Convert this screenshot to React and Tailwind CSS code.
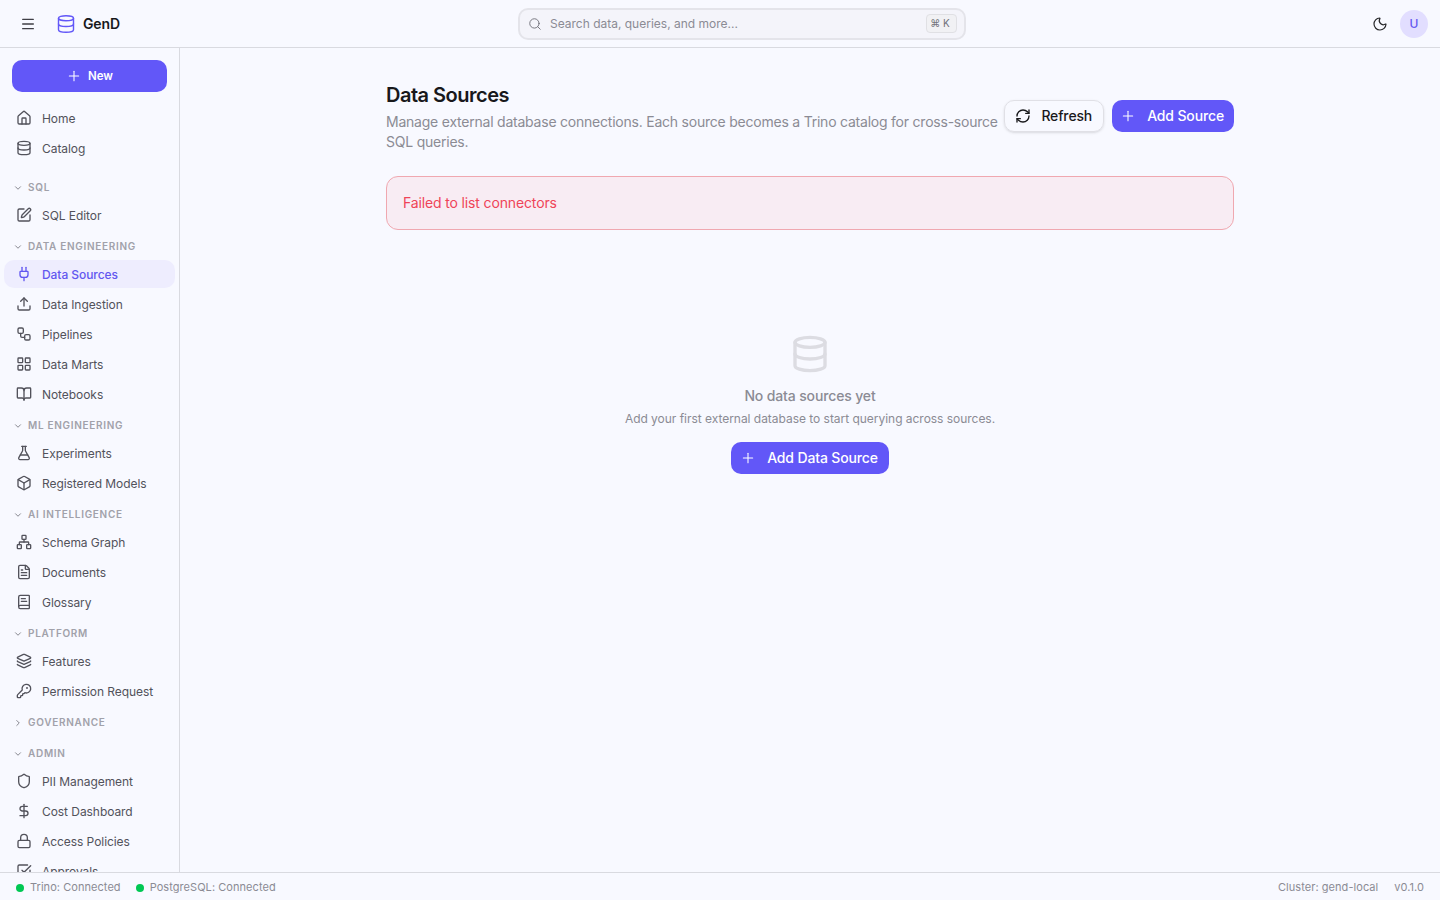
import React from 'react'
import {
  Menu, Database, Plus, House, SquarePen, ChevronDown, ChevronRight, Plug, Upload, Workflow, LayoutGrid,
  BookOpen, FlaskConical, Box, Network, FileText, BookText, Layers, KeyRound, Shield, DollarSign, Lock,
  SquareCheckBig, Search, Moon, RefreshCw,
} from 'lucide-react'

// Sidebar navigation, in display order
const topItems = [
  { label: 'Home', icon: House },
  { label: 'Catalog', icon: Database },
]

const sections = [
  { title: 'SQL', items: [{ label: 'SQL Editor', icon: SquarePen }] },
  {
    title: 'DATA ENGINEERING',
    items: [
      { label: 'Data Sources', icon: Plug, active: true },
      { label: 'Data Ingestion', icon: Upload },
      { label: 'Pipelines', icon: Workflow },
      { label: 'Data Marts', icon: LayoutGrid },
      { label: 'Notebooks', icon: BookOpen },
    ],
  },
  {
    title: 'ML ENGINEERING',
    items: [
      { label: 'Experiments', icon: FlaskConical },
      { label: 'Registered Models', icon: Box },
    ],
  },
  {
    title: 'AI INTELLIGENCE',
    items: [
      { label: 'Schema Graph', icon: Network },
      { label: 'Documents', icon: FileText },
      { label: 'Glossary', icon: BookText },
    ],
  },
  {
    title: 'PLATFORM',
    items: [
      { label: 'Features', icon: Layers },
      { label: 'Permission Request', icon: KeyRound },
    ],
  },
  { title: 'GOVERNANCE', collapsed: true, items: [] },
  {
    title: 'ADMIN',
    items: [
      { label: 'PII Management', icon: Shield },
      { label: 'Cost Dashboard', icon: DollarSign },
      { label: 'Access Policies', icon: Lock },
      { label: 'Approvals', icon: SquareCheckBig },
    ],
  },
]

function NavItem({ item }) {
  const Icon = item.icon
  return (
    <a className={`mb-0.5 flex h-7 items-center gap-2.5 rounded-[10px] px-3 text-xs tracking-[-0.005em] ${item.active ? 'bg-[#eeedfe] font-medium text-[#6257f0]' : 'text-[#52525b]'}`}>
      <Icon size={16} strokeWidth={2} className="shrink-0" />
      <span className="mt-0.5">{item.label}</span>
    </a>
  )
}

function Sidebar() {
  return (
    <aside className="flex w-[180px] shrink-0 flex-col overflow-hidden border-r border-[#d9dae0]">
      <div className="px-3 pt-3">
        <button className="flex h-8 w-full items-center justify-center gap-1.5 rounded-[10px] bg-[#6257f8] text-[11.5px] font-semibold text-white">
          <Plus size={16} strokeWidth={1.6} />
          <span className="mt-0.5">New</span>
        </button>
      </div>
      <nav className="mt-3 px-1">
        {topItems.map((item) => <NavItem key={item.label} item={item} />)}
        <div className="h-2" />
        {sections.map((section) => (
          <div key={section.title}>
            <div className={`flex items-center gap-[5px] pl-[9px] pt-0.5 text-[10px] font-semibold tracking-[0.07em] text-[#a1a1aa] ${section.collapsed ? 'h-[31px] pb-0.5' : 'h-[29px]'}`}>
              {section.collapsed
                ? <ChevronRight size={10} strokeWidth={2} className="text-[#71717a]" />
                : <ChevronDown size={10} strokeWidth={2} className="text-[#71717a]" />}
              {section.title}
            </div>
            {section.items.map((item) => <NavItem key={item.label} item={item} />)}
          </div>
        ))}
      </nav>
    </aside>
  )
}

function Header() {
  return (
    <header className="flex h-12 shrink-0 items-center justify-between border-b border-[#d9dae0] pl-5 pr-3">
      <div className="flex items-center">
        <Menu size={16} strokeWidth={2} className="text-[#3f3f46]" />
        <Database size={20} strokeWidth={1.7} className="ml-[20px] text-[#6257f8]" />
        <span className="ml-[7px] text-sm font-semibold tracking-[-0.01em] text-[#18181b]">GenD</span>
      </div>
      <div className="mr-2 flex h-8 w-[448px] items-center rounded-[10px] border-2 border-[#e4e4ea] bg-[#f4f4fa] pl-2 pr-[7px] text-xs text-[#8b8b94]">
        <Search size={14} strokeWidth={1.6} className="text-[#71717a]" />
        <span className="ml-2">Search data, queries, and more...</span>
        <span className="ml-auto flex h-[19px] w-[31px] items-center justify-center rounded border border-[#e0e0e4] bg-[#f1f1f4] pr-[3px] text-[10px] text-[#71717a]">
          ⌘ K
        </span>
      </div>
      <div className="flex items-center gap-[12px]">
        <Moon size={16} strokeWidth={1.8} className="text-[#27272a]" />
        <div className="flex h-7 w-7 items-center justify-center rounded-full bg-[#e2deff] text-xs font-medium text-[#6257f0]">U</div>
      </div>
    </header>
  )
}

function PrimaryButton({ className, children }) {
  return (
    <button className={`flex h-8 items-center gap-[11px] rounded-[10px] bg-[#6257f8] text-sm font-medium tracking-[-0.01em] text-white ${className}`}>
      <Plus size={16} strokeWidth={1.6} />
      {children}
    </button>
  )
}

function Main() {
  return (
    <main className="min-w-0 flex-1 overflow-hidden">
      <div className="mx-auto max-w-4xl px-6 pt-[33px]">
        <div className="flex items-center justify-between">
          <div>
            <h1 className="text-xl font-semibold leading-7 tracking-tight text-[#18181b]">Data Sources</h1>
            <p className="mt-[3px] text-sm tracking-[-0.016em] text-[#8b8b94]">
              Manage external database connections. Each source becomes a Trino catalog for cross-source SQL queries.
            </p>
          </div>
          <div className="-mt-0.5 flex shrink-0 items-center gap-2">
            <button className="flex h-8 items-center gap-2.5 rounded-[10px] border border-[#e0e0e6] pl-[10px] pr-[11px] text-sm font-medium tracking-[-0.01em] text-[#18181b] shadow-sm">
              <RefreshCw size={16} strokeWidth={2} />
              Refresh
            </button>
            <PrimaryButton className="pl-2 pr-[10px]">Add Source</PrimaryButton>
          </div>
        </div>
        <div className="mt-6 flex h-[54px] items-center rounded-xl border border-[#f0a8b0] bg-[#f8ecf3] px-4 text-sm tracking-[-0.01em] text-[#ef4458]">
          Failed to list connectors
        </div>
        <div className="mt-[104px] flex flex-col items-center">
          <Database size={40} strokeWidth={2} className="text-[#dcdce2]" />
          <h3 className="mt-3 text-sm font-medium tracking-[-0.01em] text-[#8b8b94]">No data sources yet</h3>
          <p className="mt-[5px] text-xs tracking-[-0.0025em] text-[#8b8b94]">Add your first external database to start querying across sources.</p>
          <div className="mt-[15px]">
            <PrimaryButton className="pl-[9px] pr-[11px]">Add Data Source</PrimaryButton>
          </div>
        </div>
      </div>
    </main>
  )
}

function StatusBar() {
  return (
    <footer className="flex h-7 shrink-0 items-center justify-between border-t border-[#d9dae0] px-4 pt-0.5 text-[11px] tracking-[0.005em] text-[#8b8b94]">
      <div className="flex items-center gap-[15px]">
        <span className="flex items-center gap-1.5"><i className="h-2 w-2 rounded-full bg-[#00c853]" />Trino: Connected</span>
        <span className="flex items-center gap-1.5"><i className="h-2 w-2 rounded-full bg-[#00c853]" />PostgreSQL: Connected</span>
      </div>
      <div className="flex items-center gap-4">
        <span>Cluster: gend-local</span>
        <span>v0.1.0</span>
      </div>
    </footer>
  )
}

export default function App() {
  return (
    <div className="flex h-screen flex-col bg-[#f8f9ff] font-['Inter',sans-serif]">
      <Header />
      <div className="flex min-h-0 flex-1">
        <Sidebar />
        <Main />
      </div>
      <StatusBar />
    </div>
  )
}
